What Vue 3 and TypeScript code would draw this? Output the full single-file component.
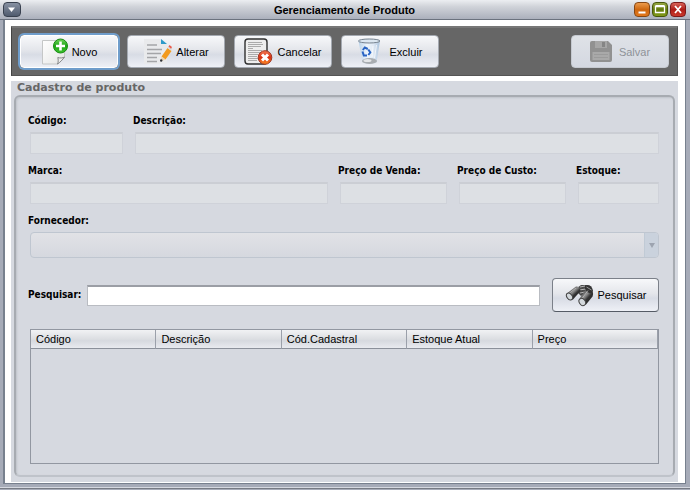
<script setup lang="ts">
import { ref } from 'vue'

const columns: string[] = ['Código', 'Descrição', 'Cód.Cadastral', 'Estoque Atual', 'Preço']
const search = ref('')
</script>

<template>
  <main class="window">
    <header class="titlebar">
      <button class="sysmenu" type="button" aria-label="Menu">
        <svg width="17" height="15" viewBox="0 0 17 15"><path d="M5 5.500h7l-3.500 4.500z" fill="#fff" /></svg>
      </button>
      <h1>Gerenciamento de Produto</h1>
      <div class="controls">
        <button class="ctl min" type="button" aria-label="Minimizar">
          <svg width="14" height="13" viewBox="0 0 14 13"><path d="M3.500 9.500h7" stroke="#fff" stroke-width="2" /></svg>
        </button>
        <button class="ctl max" type="button" aria-label="Maximizar">
          <svg width="14" height="13" viewBox="0 0 14 13"><path d="M2.500 3.500h9v6h-9z" fill="none" stroke="#fff" stroke-width="1.300" /><path d="M2.500 3h9" stroke="#fff" stroke-width="2" /></svg>
        </button>
        <button class="ctl close" type="button" aria-label="Fechar">
          <svg width="14" height="13" viewBox="0 0 14 13"><path d="M4 3l6 7M10 3l-6 7" stroke="#fff" stroke-width="1.800" /></svg>
        </button>
      </div>
    </header>

    <div class="content">
      <nav class="toolbar">
        <button class="btn focused" type="button">
          <svg width="27" height="28" viewBox="0 0 27 28">
            <defs>
              <linearGradient id="page" x1="0" y1="0" x2="1" y2="1"><stop offset="0" stop-color="#fff" /><stop offset="1" stop-color="#e4e5e4" /></linearGradient>
              <linearGradient id="green" x1="0" y1="0" x2="0" y2="1"><stop offset="0" stop-color="#6fd45a" /><stop offset=".5" stop-color="#1da516" /><stop offset="1" stop-color="#3cc22c" /></linearGradient>
            </defs>
            <path d="M1.500 2.500h22v17c-2 2-5 5-7 6.500h-15z" fill="url(#page)" stroke="#c5c7c7" />
            <path d="M16.500 26c1-2 .8-4.500.3-6.500 2.200.8 5 .5 6.700-.5-1.800 2.700-4.500 5.300-7 7z" fill="#eee" stroke="#858787" />
            <circle cx="19.500" cy="8" r="7" fill="url(#green)" stroke="#188b13" />
            <path d="M19.500 3.500v9M15 8h9" stroke="#fff" stroke-width="2.600" />
          </svg>
          <span>Novo</span>
        </button>
        <button class="btn" type="button">
          <svg width="29" height="28" viewBox="0 0 29 28">
            <path d="M1 1h17l6 5v20H1z" fill="#e9eaec" />
            <path d="M18 1l6 5h-6z" fill="#2e9ac9" />
            <path d="M4 7h10M4 11.500h15M4 15.500h14M4 19.500h10M4 23.500h10" stroke="#a4a5a8" stroke-width="1.300" />
            <path d="M18.500 18.500l6-8.500 4 3-6 8.500z" fill="#f39a1d" />
            <path d="M24.500 10l1.500-2.200 3 2.500-1 2.200z" fill="#ddd9d5" />
            <path d="M25.500 8.500l1-1.500 2.500 2-1 1.800z" fill="#ea5b4c" />
            <path d="M18.500 18.500l4 3-5 2z" fill="#ecd3ae" /><circle cx="18.200" cy="22.500" r="1.200" fill="#30343b" />
          </svg>
          <span>Alterar</span>
        </button>
        <button class="btn" type="button">
          <svg width="29" height="28" viewBox="0 0 29 28">
            <defs><linearGradient id="red" x1="0" y1="0" x2="0" y2="1"><stop offset="0" stop-color="#f67b52" /><stop offset=".5" stop-color="#d83215" /><stop offset="1" stop-color="#ff8c20" /></linearGradient></defs>
            <rect x="1" y="1" width="22" height="25" rx="3" fill="#eee" stroke="#303030" stroke-width="1.400" />
            <path d="M4 4.500h14M4 6.500h15M4 8.500h13M4 10.500h5M4 12.500h14M4 14.500h14M4 16.500h10M4 18.500h9M4 20.500h10M4 22.500h9" stroke="#999" stroke-width=".8" />
            <circle cx="21" cy="19.500" r="6.800" fill="url(#red)" stroke="#9d3422" />
            <path d="M18 16.500l6 6M24 16.500l-6 6" stroke="#fff" stroke-width="3" />
          </svg>
          <span>Cancelar</span>
        </button>
        <button class="btn wide-gap" type="button">
          <svg width="25" height="28" viewBox="0 0 25 28">
            <defs><linearGradient id="bin" x1="0" y1="0" x2="1" y2="0"><stop offset="0" stop-color="#b9d2e8" /><stop offset=".4" stop-color="#eef5fc" /><stop offset=".7" stop-color="#dfe9f5" /><stop offset="1" stop-color="#a9c2dc" /></linearGradient></defs>
            <path d="M1.500 3l4 21c3 2.700 11 2.700 14 0l3.500-21z" fill="url(#bin)" />
            <ellipse cx="12.500" cy="23" rx="7.500" ry="3" fill="#a9adb1" /><ellipse cx="10.500" cy="22.500" rx="4" ry="1.500" fill="#e5e7e9" />
            <ellipse cx="12.200" cy="3" rx="10.800" ry="2" fill="#dce7f1" stroke="#75828f" />
            <path d="M5.800 12l2-2.500 3 1.500M11.300 11.500l2 3-2 2.500M10 17.500H6.800l-1.300-4" fill="none" stroke="#2864c4" stroke-width="2" />
            <path d="M16 8l-1 11M19.500 7l-2 13" stroke="#fff" stroke-width="1" opacity=".7" />
          </svg>
          <span>Excluir</span>
        </button>
        <button class="btn wide-gap save" type="button" disabled>
          <svg width="22" height="21" viewBox="0 0 22 21">
            <path d="M2 0h16l4 4v15q0 2-2 2H2q-2 0-2-2V2q0-2 2-2z" fill="#919191" />
            <path d="M5 0h12v7H5z" fill="#a6a6a6" /><path d="M12 1h3v5h-3z" fill="#858585" />
            <path d="M2.500 11h17v8h-17z" fill="#a9a9a9" /><path d="M4 13.500h14M4 16.500h14" stroke="#9b9b9b" />
          </svg>
          <span>Salvar</span>
        </button>
      </nav>

      <section class="panel" aria-labelledby="panel-title">
        <h2 id="panel-title">Cadastro de produto</h2>
        <div class="frame">
          <div class="row">
            <div class="field code"><label for="codigo">Código:</label><input id="codigo" type="text" disabled /></div>
            <div class="field grow"><label for="descricao">Descrição:</label><input id="descricao" type="text" disabled /></div>
          </div>
          <div class="row">
            <div class="field grow"><label for="marca">Marca:</label><input id="marca" type="text" disabled /></div>
            <div class="field price"><label for="venda">Preço de Venda:</label><input id="venda" type="text" disabled /></div>
            <div class="field price"><label for="custo">Preço de Custo:</label><input id="custo" type="text" disabled /></div>
            <div class="field stock"><label for="estoque">Estoque:</label><input id="estoque" type="text" disabled /></div>
          </div>
          <div class="field">
            <label for="fornecedor">Fornecedor:</label>
            <div class="combo">
              <select id="fornecedor" disabled><option></option></select>
              <span class="arrow"><svg width="6" height="5" viewBox="0 0 6 5"><path d="M0 0h6L3 5z" fill="#9da4b0" /></svg></span>
            </div>
          </div>
          <form class="search" @submit.prevent>
            <label for="pesquisa">Pesquisar:</label>
            <input id="pesquisa" v-model="search" type="text" />
            <button class="btn find" type="submit">
              <svg width="29" height="23" viewBox="0 0 29 23">
                <defs><linearGradient id="tube" x1="0" y1="0" x2="1" y2="1"><stop offset="0" stop-color="#222" /><stop offset=".45" stop-color="#8d8d8d" /><stop offset=".6" stop-color="#333" /><stop offset="1" stop-color="#171717" /></linearGradient></defs>
                <path d="M12 4l4-3 6 0 2 6-8 5-3-3z" fill="#4a4a4a" />
                <path d="M15 3l5-1M14 6l7-1M15 9l5-1" stroke="#b5b5b5" />
                <path d="M1 10L11 2.500q4-.5 4.500 4.500L8 15.500q-7 1.500-7-5.500z" fill="url(#tube)" />
                <path d="M13.500 16l6.500-9.500q3-3 6.500-.5 2.500 2.500 1 6.500l-6.500 8q-6 3-7.500-4.500z" fill="url(#tube)" />
                <path d="M20 1.500q6-2 8 5l-1 3q-5 0-7-5z" fill="#333" /><path d="M21.500 3l5 3" stroke="#999" />
                <path d="M4 9.500L11 4M17 14.500l6-8" stroke="#bdbdbd" opacity=".8" />
                <ellipse cx="4.500" cy="12.500" rx="2.600" ry="3.800" transform="rotate(-35 4.500 12.500)" fill="#d3d8dc" stroke="#444" />
                <ellipse cx="17.300" cy="18" rx="2.900" ry="3.900" transform="rotate(-35 17.300 18)" fill="#d3d8dc" stroke="#444" />
              </svg>
              <span>Pesquisar</span>
            </button>
          </form>
          <div class="grid">
            <table>
              <thead><tr><th v-for="c in columns" :key="c" scope="col">{{ c }}</th></tr></thead>
              <tbody></tbody>
            </table>
          </div>
        </div>
      </section>
    </div>
  </main>
</template>

<style>
body { background: #9ea4b0; }
</style>

<style scoped>
* { box-sizing: border-box; }
.window {
  min-height: 100vh;
  display: flex;
  flex-direction: column;
  padding: 0 4px 5px 3px;
  background: #a6abb8;
  border-bottom: 1px solid #a6abb8;
  box-shadow: inset 0 -1px #777b84, inset 0 -2px #d5d8e0;
  font-family: "Liberation Sans", Arial, sans-serif;
  font-size: 11px;
  color: #000;
}
button, input, select { font: inherit; color: inherit; margin: 0; padding: 0; }
svg { display: block; flex: none; }
.titlebar {
  height: 20px;
  display: flex;
  align-items: center;
  margin: 0 -4px 0 -3px;
  padding: 0 4px 0 3px;
  background: linear-gradient(#eceef1, #d0d3d9 35%, #abb0bc);
  border-bottom: 1px solid #6b727e;
}
.titlebar h1 { flex: 1; margin: 0; padding-left: 34px; text-align: center; font-size: 11px; line-height: 18px; }
.sysmenu { width: 18px; height: 15px; border: 1px solid #39414f; border-radius: 4px; background: linear-gradient(#8791a2, #505b6e); overflow: hidden; }
.sysmenu svg { margin: -1px; }
.controls { display: flex; gap: 2px; }
.ctl { width: 16px; height: 15px; border: 1px solid; border-radius: 4px; }
.min { border-color: #864714; background: linear-gradient(#ec9b4c, #ce6811 50%, #e2771b); }
.max { border-color: #46570b; background: linear-gradient(#97a744, #647c0d 50%, #809919); }
.close { border-color: #7c1919; background: linear-gradient(#d86258, #af1e18 50%, #c9382b); }
.content {
  flex: 1;
  display: flex;
  flex-direction: column;
  gap: 5px;
  padding: 6px 7px 1px 6px;
  background: #fff;
  border: 1px solid #77808e;
  border-top: 0;
  border-left-width: 2px;
}
.toolbar {
  display: flex;
  align-items: center;
  gap: 9px;
  height: 50px;
  padding: 0 8px;
  background: #666;
  border: 1px solid #555;
  border-top: 2px solid #777;
  border-left-color: #444;
}
.btn {
  width: 98px;
  height: 33px;
  display: flex;
  align-items: center;
  justify-content: center;
  gap: 4px;
  border: 1px solid #a4a9b1;
  border-radius: 4px;
  background: linear-gradient(#f7f8fa, #e4e6eb 45%, #d8dce5 60%, #eef0f6);
}
.wide-gap { gap: 7px; }
.focused { border-color: #fff; box-shadow: 0 0 0 2px #6f9dcb; }
.save { margin-left: auto; color: #8e9298; background: linear-gradient(#dfe2e7, #d4d8e1); border-color: #c5c9d0; }
.panel {
  flex: 1;
  min-width: 0;
  display: flex;
  flex-direction: column;
  padding: 0 3px 5px;
  background: #d6d9e0;
}
h2 { margin: 0; padding: 0 3px; font: bold 11px/14px "DejaVu Sans", Verdana, sans-serif; color: #666; }
.frame {
  flex: 1;
  display: flex;
  flex-direction: column;
  gap: 9px;
  padding: 16px 14px 11px 12px;
  border: 2px solid #a7abb1;
  border-bottom-color: #bfc3ca;
  border-radius: 6px;
  box-shadow: inset 1px 1px 2px #bfc3c9;
}
.row { display: flex; gap: 10px; }
.field { display: flex; flex-direction: column; gap: 3px; min-width: 0; }
.grow { flex: 1; }
.code { width: 95px; }
.price { width: 109px; }
.stock { width: 83px; }
label { font: bold 10px/16px "DejaVu Sans Condensed", "DejaVu Sans", sans-serif; white-space: nowrap; }
input { min-width: 0; border-radius: 0; outline: none; }
.field input { height: 22px; margin-left: 2px; background: #dde0e4; border: 1px solid #cfd2d9; border-top: 2px solid #cbced4; }
.combo { position: relative; margin-left: 2px; height: 26px; }
.combo select { width: 100%; height: 100%; appearance: none; border: 1px solid #bfc6d0; border-radius: 4px; background: linear-gradient(#e1e2e6, #d5d8df); opacity: 1; }
.arrow {
  position: absolute;
  inset: 1px 1px 1px auto;
  width: 14px;
  display: flex;
  align-items: center;
  justify-content: center;
  border-left: 1px solid #c0cad5;
  border-radius: 0 3px 3px 0;
  background: #cad2dd;
}
.search { display: flex; align-items: center; margin-top: 11px; }
.search label { width: 59px; }
.search input { flex: 1; height: 21px; padding: 0 4px; background: #fff; border: 1px solid #b9bcc2; border-top: 2px solid #9b9ea5; }
.find { width: 107px; height: 34px; margin-left: 12px; border-color: #7b8089; border-bottom-color: #555b65; }
.grid { flex: 1; margin: 8px 0 0 2px; border: 1px solid #9297a1; }
table { width: 100%; table-layout: fixed; border-collapse: separate; border-spacing: 0; }
th {
  height: 18px;
  padding: 1px 5px 0;
  text-align: left;
  font-weight: normal;
  line-height: 17px;
  border-right: 1px solid #9ba0aa;
  border-bottom: 1px solid #8b909a;
  background: linear-gradient(#f1f2f4, #dcdee2 50%, #d6d9df 60%, #e8eaef);
}
</style>
